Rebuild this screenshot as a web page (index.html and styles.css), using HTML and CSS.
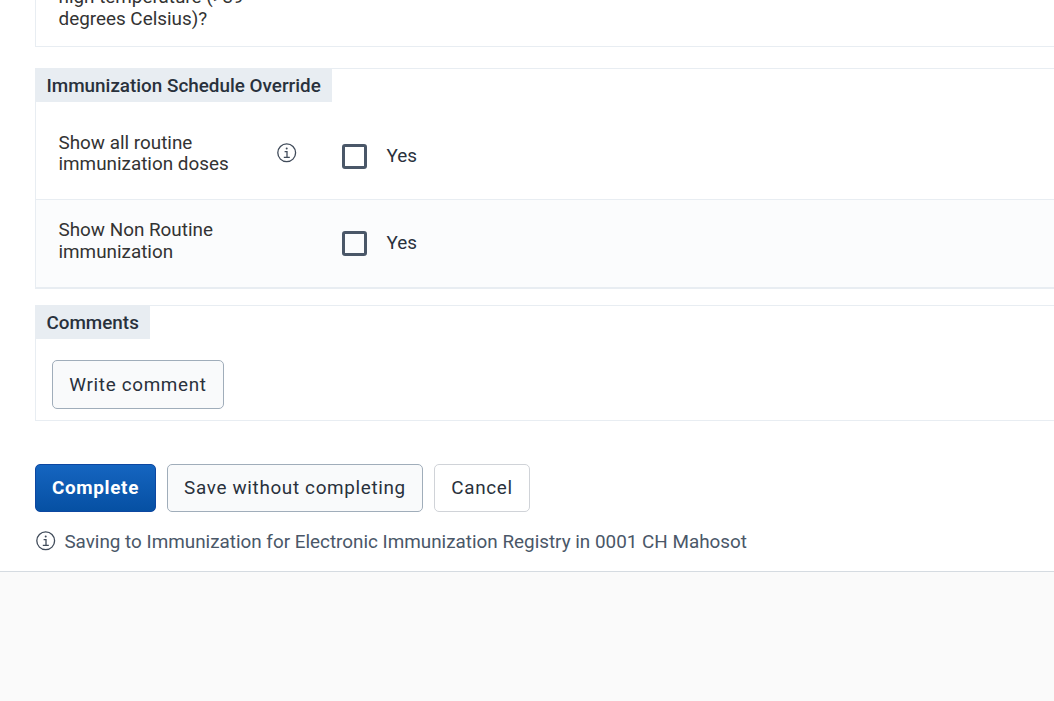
FILE: index.html
```html
<!DOCTYPE html>
<html lang="en">
<head>
<meta charset="utf-8">
<title>Immunization</title>
<link rel="stylesheet" href="styles.css">
</head>
<body>
<svg class="symbols" aria-hidden="true">
  <symbol id="info" viewBox="0 0 20 20">
    <circle cx="9.7" cy="9.8" r="8.9" fill="none" stroke="currentColor" stroke-width="1.3"/>
    <path d="M7.6 8.7h2.4v5.4M6.8 14.3h6" fill="none" stroke="currentColor" stroke-width="1.3"/>
    <circle cx="9.7" cy="5.5" r="1" fill="currentColor"/>
  </symbol>
</svg>
<main class="form">
  <section class="section section-first">
    <div class="label">high temperature (&gt;39 degrees Celsius)?</div>
  </section>
  <section class="section section-override">
    <h2 class="title">Immunization Schedule Override</h2>
    <div class="row">
      <div class="label">Show all routine immunization doses</div>
      <svg class="icon row-icon"><use href="#info"/></svg>
      <label class="choice"><span class="box"></span><span class="choice-text">Yes</span></label>
    </div>
    <div class="row row-alt">
      <div class="label">Show Non Routine immunization</div>
      <span class="row-icon"></span>
      <label class="choice"><span class="box"></span><span class="choice-text">Yes</span></label>
    </div>
  </section>
  <section class="section section-comments">
    <h2 class="title">Comments</h2>
    <button class="button button-comment">Write comment</button>
  </section>
  <div class="actions">
    <button class="button button-primary">Complete</button>
    <button class="button button-save">Save without completing</button>
    <button class="button button-cancel">Cancel</button>
  </div>
  <div class="notice">
    <svg class="icon"><use href="#info"/></svg>
    <span class="notice-text">Saving to Immunization for Electronic Immunization Registry in 0001 CH Mahosot</span>
  </div>
</main>
</body>
</html>
```
FILE: styles.css
```css
* { box-sizing: border-box; }

body {
  margin: 0;
  height: 701px;
  overflow: hidden;
  background: #fafafa;
  font-family: Roboto, "Liberation Sans", sans-serif;
  font-size: 18.88px;
  color: #29313c;
}

.symbols { display: none; }

.form {
  height: 572px;
  padding-left: 35px;
  background: #fff;
  border-bottom: 1px solid #d5dbe1;
  overflow: hidden;
}

.section {
  border: 1px solid #e8edf2;
  border-right: 0;
}

.section-first {
  height: 47px;
  border-top: 0;
  display: flex;
  align-items: flex-end;
  padding: 0 0 17px 22.5px;
}

.section-override {
  margin-top: 21px;
  height: 221px;
  border-bottom-width: 2px;
}

.section-comments {
  margin-top: 16px;
  height: 116px;
}

.title {
  display: block;
  width: max-content;
  height: 34px;
  margin: -1px 0 0 -1px;
  padding: 1px 11.4px 0 11.4px;
  background: #e8edf2;
  font-size: 18.88px;
  font-weight: 500;
  line-height: 34px;
}

.row {
  display: flex;
  align-items: flex-start;
  height: 97px;
  padding: 30px 0 0 22.5px;
}

.row-alt {
  height: 88px;
  padding-top: 19px;
  border-top: 1px solid #e8edf2;
  background: #fbfcfd;
}

.label {
  width: 200px;
  line-height: 21.5px;
  color: #333;
}

.row .label { margin-top: -0.5px; }

.row-alt .label { margin-top: 0; }

.icon {
  flex: none;
  width: 20px;
  height: 20px;
  color: #404b5a;
}

.row-icon {
  width: 20px;
  margin: 11px 0 0 18px;
}

.choice {
  display: flex;
  gap: 20px;
  margin: 12px 0 0 45px;
}

.box {
  width: 25px;
  height: 25px;
  border: 3px solid #4a5768;
  border-radius: 3px;
}

.choice-text { line-height: 24px; }

.button {
  height: 48px;
  padding: 0 0 2px;
  border: 1px solid #a0adba;
  border-radius: 5px;
  background: #f9fafb;
  color: #29313c;
  font: inherit;
  letter-spacing: 0.667px;
  white-space: nowrap;
}

.button-comment {
  display: block;
  width: 172px;
  height: 49px;
  margin: 21px 0 0 16px;
  padding: 0;
}

.actions {
  display: flex;
  gap: 11px;
  margin-top: 43px;
}

.button-primary {
  width: 121px;
  border-color: #0d47a1;
  background: linear-gradient(#1565c0, #0650a3);
  color: #fff;
  font-weight: 700;
}

.button-save { width: 256px; }

.button-cancel {
  width: 96px;
  border-color: #d0d3d8;
  background: #fff;
}

.notice {
  display: flex;
  align-items: flex-start;
  gap: 8.4px;
  margin: 19px 0 0 1px;
  color: #4a5768;
}

.notice-text { line-height: 22px; }
```
